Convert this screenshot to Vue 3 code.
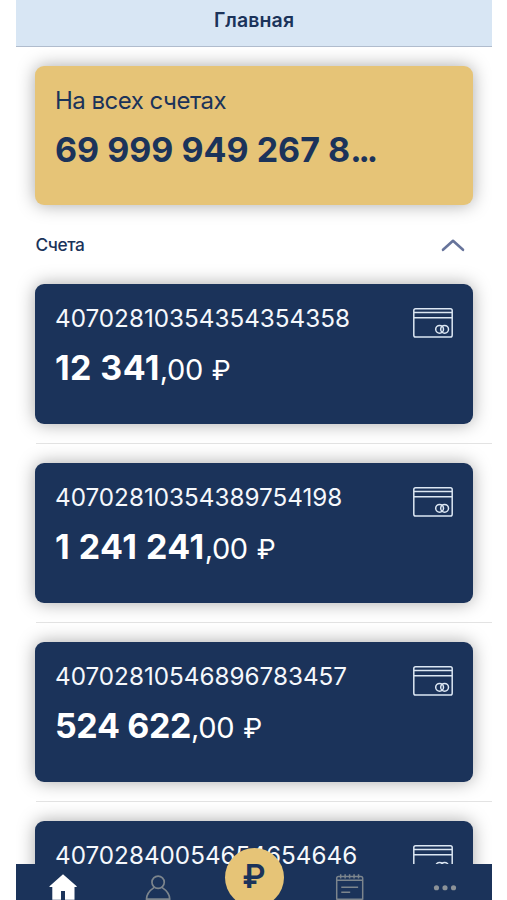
<script setup>
const accounts = [
  { number: '40702810354354354358', whole: '12 341', tracking: 0.4 },
  { number: '40702810354389754198', whole: '1 241 241', tracking: 0.5 },
  { number: '40702810546896783457', whole: '524 622', tracking: -0.35 },
  { number: '40702840054654654646', whole: '', tracking: 0 },
]
</script>

<template>
  <div class="screen">
    <header class="header"><h1>Главная</h1></header>
    <main class="content">
      <section class="card total">
        <div class="label">На всех счетах</div>
        <div class="sum">69 999 949 267 8<span class="dots">...</span></div>
      </section>
      <div class="section-head">
        <span>Счета</span>
        <svg class="chevron" width="24" height="14" viewBox="0 0 24 14">
          <path d="M2 11.8 L12 2.8 L22 11.8" fill="none" stroke="#67749b" stroke-width="2.6" stroke-linecap="round" stroke-linejoin="round" />
        </svg>
      </div>
      <div v-for="a in accounts" :key="a.number" class="row">
        <article class="card account">
          <div class="details">
            <div class="number">{{ a.number }}</div>
            <div v-if="a.whole" class="amount"><b :style="{ letterSpacing: a.tracking + 'px' }">{{ a.whole }}</b><span class="cents">,00</span><span class="currency">₽</span></div>
          </div>
          <svg class="card-icon" width="40" height="30" viewBox="0 0 40 30" fill="none" stroke="#dce7f3" stroke-width="1.5">
            <rect x=".8" y=".8" width="38.4" height="28.2" rx="1.8" />
            <path d="M1 4.6H39M1 9.8H39" />
            <circle cx="26.6" cy="21.3" r="3.9" />
            <circle cx="31.6" cy="21.3" r="3.9" />
          </svg>
        </article>
      </div>
    </main>
    <nav class="tabs">
      <svg class="tab" viewBox="0 0 96 36">
        <path d="M47.4 10.2 L61.2 22.3 V23.1 H59 V36 H49.4 V27 H45.4 V36 H36.6 V23.1 H33.8 V22.3 Z" fill="#fff" />
      </svg>
      <svg class="tab" viewBox="0 0 96 36" fill="none" stroke="#7c858d" stroke-width="1.7">
        <circle cx="47.5" cy="18.2" r="6.2" />
        <path d="M35.8 35.2 C35.8 30 39.5 26.2 43.6 23.4 M51.4 23.4 C55.5 26.2 59.2 30 59.2 35.2 M35 35.2H60" />
      </svg>
      <div class="tab pay"><span>₽</span></div>
      <svg class="tab" viewBox="0 0 96 36" fill="none" stroke="#7c858d" stroke-width="1.5">
        <path d="M35 36V14.3Q35 12.5 36.8 12.5H59.4Q61.2 12.5 61.2 14.3V36M35 16.2H61.2M39 10.3V14.5M43.5 10.3V14.5M48 10.3V14.5M52.5 10.3V14.5M57 10.3V14.5M39.6 23.4H56.6M39.6 28.4H48.6M35 35.3H61.2" />
      </svg>
      <svg class="tab" viewBox="0 0 96 36" fill="#8c9298">
        <circle cx="39.8" cy="23.8" r="2.6" /><circle cx="48.4" cy="23.8" r="2.6" /><circle cx="57" cy="23.8" r="2.6" />
      </svg>
    </nav>
  </div>
</template>

<style>
html, body { margin: 0; overflow: hidden; background: #fff; }
</style>
<style scoped>
* { box-sizing: border-box; }
.screen {
  width: 476px;
  height: 900px;
  margin-left: 16px;
  display: flex;
  flex-direction: column;
  overflow: hidden;
  background: #fff;
  font-family: Inter, "Liberation Sans", sans-serif;
  color: #1b335a;
}
.header {
  flex: none;
  height: 47px;
  background: #d8e6f4;
  border-bottom: 1.2px solid #b0bccd;
  text-align: center;
  z-index: 1;
}
h1 { margin: 0; font-size: 19.5px; line-height: 40px; font-weight: 600; letter-spacing: .1px; }
.content { flex: 1; min-height: 0; padding-top: 18.7px; }
.card {
  width: 437.3px;
  height: 139.8px;
  margin-left: 19.4px;
  padding: 0 19.6px;
  border-radius: 9px;
  box-shadow: 0 0 18px rgba(0, 0, 0, .34);
}
.total { background: #e6c477; }
.label { padding-top: 19px; font-size: 24px; line-height: 32px; letter-spacing: -.5px; white-space: nowrap; }
.sum { margin-top: 12px; font-size: 34px; line-height: 42px; font-weight: 700; white-space: nowrap; }
.dots { letter-spacing: -3px; }
.section-head {
  height: 78.5px;
  padding: 0 27px 0 19.5px;
  display: flex;
  align-items: center;
  justify-content: space-between;
  font-size: 17.3px;
  font-weight: 500;
  letter-spacing: -.4px;
}
.chevron { display: block; }
.row { height: 179.1px; }
.row::after {
  content: "";
  display: block;
  height: 1px;
  margin: 19px 0 0 19.5px;
  background: #e3e3e3;
}
.account {
  background: #1b335a;
  color: #fff;
  display: flex;
  justify-content: space-between;
}
.number { padding-top: 19px; font-size: 24.25px; line-height: 32px; color: #f5f8fc; }
.amount { margin-top: 12px; display: flex; align-items: baseline; font-size: 29px; line-height: 42px; font-weight: 400; white-space: nowrap; }
.amount b { font-size: 34px; font-weight: 700; }
.cents { letter-spacing: -.4px; }
.currency { margin-left: 9px; font-size: 27px; }
.card-icon { flex: none; margin: 24px -.4px 0 0; }
.tabs {
  position: relative;
  z-index: 2;
  flex: none;
  height: 36px;
  background: #1b335a;
  display: flex;
}
.tab { display: block; flex: 1 1 0; width: 0; height: 36px; }
.pay { display: flex; justify-content: center; }
.pay span {
  flex: none;
  width: 59px;
  height: 59px;
  margin-top: -16.5px;
  border-radius: 50%;
  background: #e6c477;
  text-align: center;
  font-size: 32px;
  line-height: 58px;
  font-weight: 600;
}
</style>
